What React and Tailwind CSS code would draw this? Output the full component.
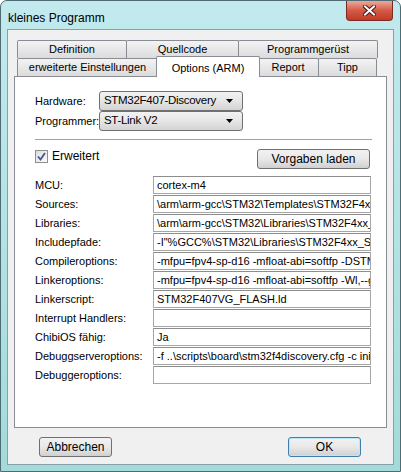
import React from "react";

const tabsBack = [
  { label: "Definition", w: "w-[110px]" },
  { label: "Quellcode", w: "w-[113px]" },
  { label: "Programmgerüst", w: "w-[140px]" },
];

const fields = [
  ["MCU:", "cortex-m4"],
  ["Sources:", "\\arm\\arm-gcc\\STM32\\Templates\\STM32F4xx\\startup_stm32f4xx.s"],
  ["Libraries:", "\\arm\\arm-gcc\\STM32\\Libraries\\STM32F4xx_StdPeriph_Driver"],
  ["Includepfade:", "-I\"%GCC%\\STM32\\Libraries\\STM32F4xx_StdPeriph_Driver\\inc\""],
  ["Compileroptions:", "-mfpu=fpv4-sp-d16 -mfloat-abi=softfp -DSTM32F4XX"],
  ["Linkeroptions:", "-mfpu=fpv4-sp-d16 -mfloat-abi=softfp -Wl,--gc-sections"],
  ["Linkerscript:", "STM32F407VG_FLASH.ld"],
  ["Interrupt Handlers:", ""],
  ["ChibiOS fähig:", "Ja"],
  ["Debuggserveroptions:", "-f ..\\scripts\\board\\stm32f4discovery.cfg -c init"],
  ["Debuggeroptions:", ""],
];

const Tab = ({ label, w }) => (
  <div
    className={`${w} h-[18px] -ml-px first:ml-0 flex items-center justify-center border border-b-0 border-[#898c95] rounded-t-[2px] bg-gradient-to-b from-[#f3f3f3] to-[#dcdcdc] whitespace-nowrap`}
  >
    {label}
  </div>
);

const Combo = ({ value }) => (
  <div className="w-[144px] h-[20px] shrink-0 flex items-center justify-between pl-[4px] pr-[9px] border border-[#707070] rounded-[3px] bg-gradient-to-b from-[#f2f2f2] via-[#e6e6e6] to-[#d3d3d3] text-[11.5px] tracking-[-0.3px] whitespace-nowrap overflow-hidden">
    <span>{value}</span>
    <svg width="7" height="4" viewBox="0 0 7 4" className="shrink-0">
      <path d="M0 0h7L3.5 4z" fill="#000" />
    </svg>
  </div>
);

const Button = ({ children, className = "" }) => (
  <div
    className={`h-[20px] flex items-center justify-center rounded-[3px] border bg-gradient-to-b from-[#f2f2f2] via-[#e8e8e8] to-[#d0d0d0] ${className}`}
  >
    {children}
  </div>
);

export default function App() {
  return (
    <div
      className="w-[401px] h-[472px] flex flex-col bg-gradient-to-b from-[#c2eaee] to-[#a3dbd9] rounded-t-[7px] border border-[#4f6b74] overflow-hidden text-[11px] text-black"
      style={{ fontFamily: '"Liberation Sans", Arial, sans-serif' }}
    >
      {/* title bar */}
      <div className="h-[28px] flex justify-between items-start shrink-0">
        <div className="pl-[7px] pt-[8px] text-[12px]">kleines Programm</div>
        <div className="mr-[7px] w-[47px] h-[20px] flex items-center justify-center rounded-b-[4px] border border-t-0 border-[#7a2a22] bg-gradient-to-b from-[#e9a99b] via-[#d45a45] to-[#c23a26]">
          <svg width="13" height="11" viewBox="0 0 13 11">
            <path d="M2 1.5l9 8M11 1.5l-9 8" stroke="#4a1a14" strokeWidth="4" strokeLinecap="square" />
            <path d="M2 1.5l9 8M11 1.5l-9 8" stroke="#fff" strokeWidth="2" strokeLinecap="square" />
          </svg>
        </div>
      </div>

      {/* client area */}
      <div className="mx-[6px] mb-[6px] flex-1 flex flex-col bg-[#f0f0f0] border border-[#8aa0a8] px-[6px] pt-[10px]">
        {/* tab headers */}
        <div className="flex flex-col px-[3px]">
          <div className="flex">
            {tabsBack.map((t) => (
              <Tab key={t.label} {...t} />
            ))}
          </div>
          <div className="flex items-end h-[18px]">
            <Tab label="erweiterte Einstellungen" w="w-[141px]" />
            <div className="relative z-10 w-[104px] h-[21px] -mx-[2px] -mb-px flex items-start justify-center pt-[3px] border border-b-0 border-[#898c95] rounded-t-[2px] bg-white">
              Options (ARM)
            </div>
            <Tab label="Report" w="w-[62px]" />
            <Tab label="Tipp" w="w-[59px]" />
          </div>
        </div>

        {/* tab page */}
        <div className="h-[352px] bg-white border border-[#898c95] pl-[20px] pt-[14px]">
          <div className="flex flex-col">
            <div className="flex items-center">
              <span className="w-[64px] shrink-0">Hardware:</span>
              <Combo value="STM32F407-Discovery" />
            </div>
            <div className="flex items-center">
              <span className="w-[64px] shrink-0">Programmer:</span>
              <Combo value="ST-Link V2" />
            </div>
          </div>

          <div className="mt-[8px] w-[337px] h-[2px] border-t border-[#a0a0a0] border-b border-b-white" />

          <div className="mt-[6px] w-[337px] flex justify-between items-start">
            <div className="flex items-center gap-[4px]">
              <div className="w-[13px] h-[13px] border border-[#8e8f8f] bg-gradient-to-br from-[#dcdcdc] to-[#fbfbfb] flex items-center justify-center">
                <svg width="9" height="9" viewBox="0 0 9 9">
                  <path d="M1 4.5l2.5 3L8 1" fill="none" stroke="#41578f" strokeWidth="1.8" />
                </svg>
              </div>
              <span className="text-[12px]">Erweitert</span>
            </div>
            <Button className="w-[113px] mt-[2px] mr-[2px] border-[#707070] text-[12px]">
              Vorgaben laden
            </Button>
          </div>

          <div className="mt-[7px] flex flex-col gap-[1px]">
            {fields.map(([label, value]) => (
              <div key={label} className="flex items-center h-[18px]">
                <span className="w-[118px] shrink-0 whitespace-nowrap">{label}</span>
                <div className="w-[218px] h-[18px] shrink-0 border border-[#a6a6a6] border-t-[#8d8d8d] bg-white px-[3px] flex items-center overflow-hidden whitespace-nowrap">
                  {value}
                </div>
              </div>
            ))}
          </div>
        </div>

        {/* dialog buttons */}
        <div className="mt-[9px] flex justify-between pl-[25px] pr-[26px]">
          <Button className="w-[73px] border-[#707070] text-[12px]">Abbrechen</Button>
          <Button className="w-[73px] border-[#3c7fb1] shadow-[inset_0_0_0_1px_#bde6fb] text-[12px]">
            OK
          </Button>
        </div>
      </div>
    </div>
  );
}
